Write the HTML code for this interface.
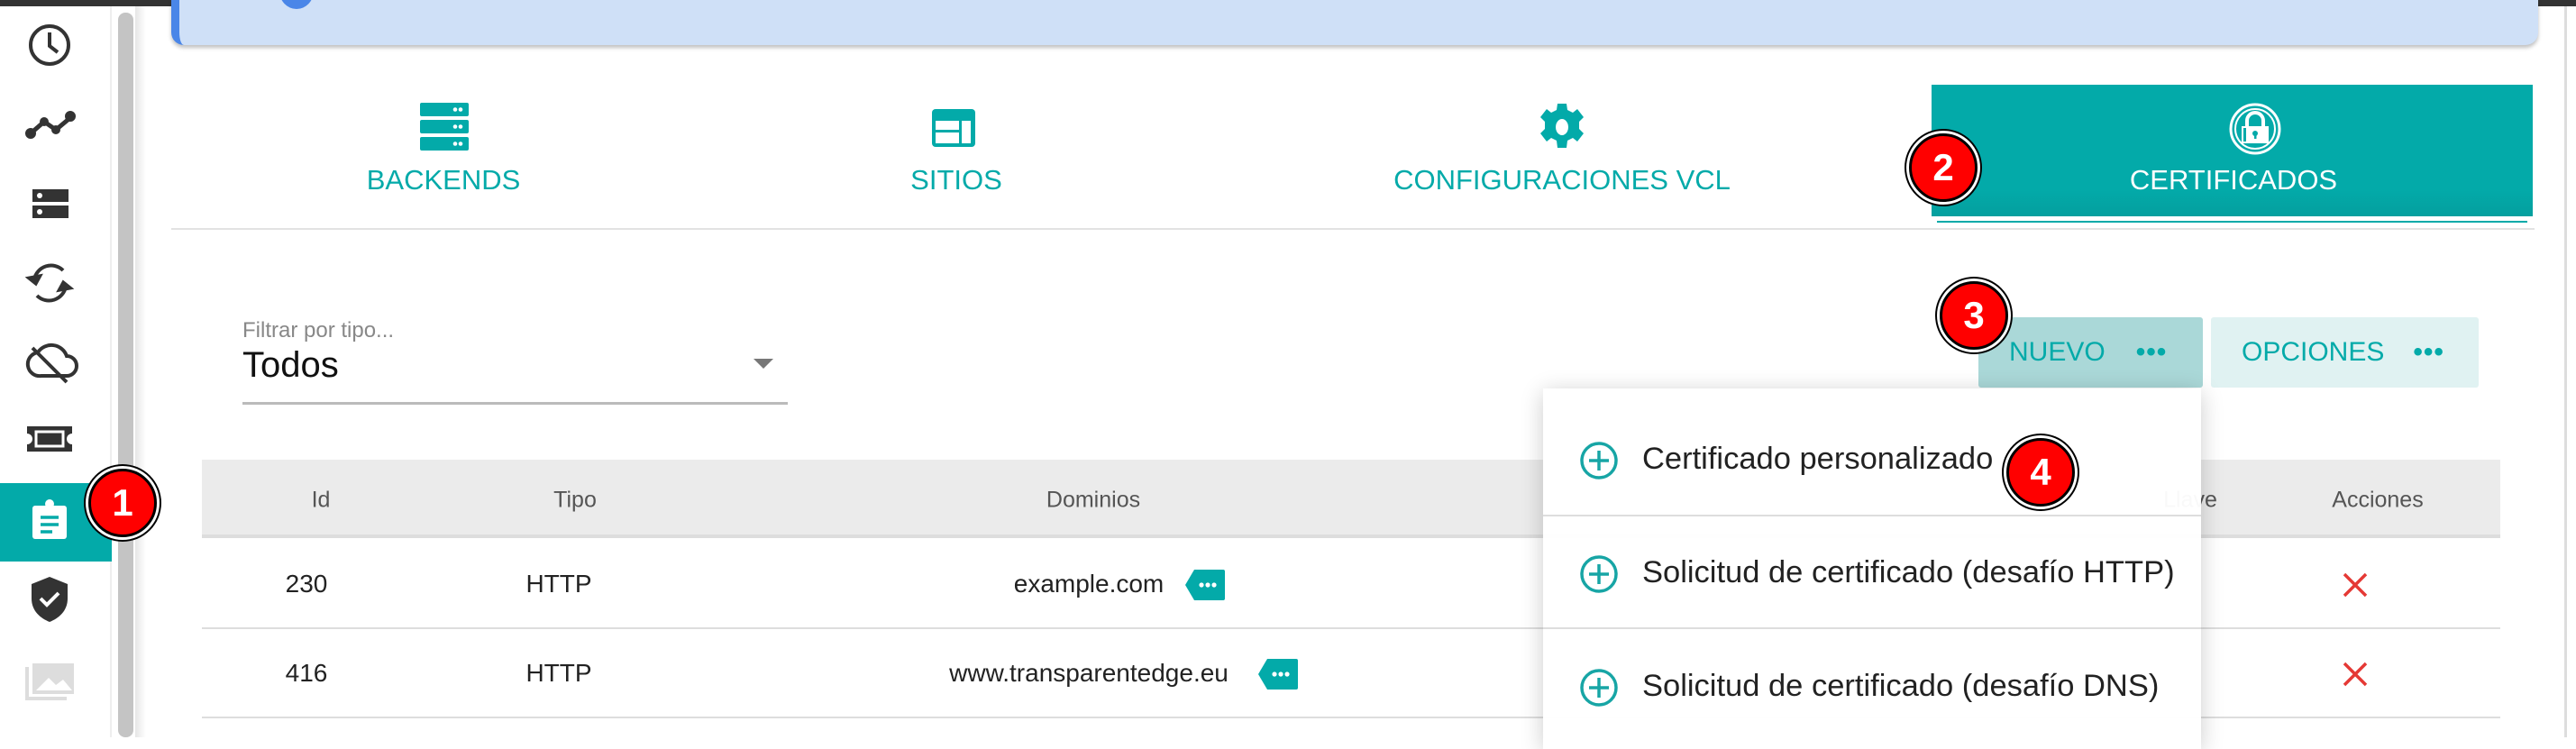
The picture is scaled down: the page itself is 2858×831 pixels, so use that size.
<!DOCTYPE html>
<html><head><meta charset="utf-8"><style>
*{margin:0;padding:0;box-sizing:border-box}
body{width:2858px;height:818px;overflow:hidden;background:#fff;font-family:"Liberation Sans",sans-serif;position:relative}
.a{position:absolute}
.tl{color:#03aaa9;font-size:31px;white-space:nowrap;transform:translateX(-50%)}
.hd{color:#555;font-size:25px;transform:translate(-50%,-50%);white-space:nowrap}
.td{color:#222;font-size:28px;transform:translate(-50%,-50%);white-space:nowrap}
.badge{width:76px;height:76px;border-radius:50%;background:#f00;border:3px solid #000;box-shadow:0 0 0 3px #fff,0 0 0 5px #000;color:#fff;font-weight:bold;font-size:42px;display:flex;align-items:center;justify-content:center;transform:translate(-50%,-50%)}
.mi{font-size:34.5px;color:#222;white-space:nowrap}
</style></head><body>
<div class="a" style="left:0;top:0;width:2858px;height:7px;background:#333"></div>
<div class="a" style="left:0;top:7px;width:124px;height:811px;background:#fff;border-right:2px solid #eee"></div>
<div class="a" style="left:131px;top:14px;width:17px;height:804px;background:#c4c4c4;border-radius:8px"></div>
<div class="a" style="left:150px;top:7px;width:12px;height:811px;background:linear-gradient(90deg,#e6e6e6,#fff)"></div>
<div class="a" style="left:0;top:536px;width:124px;height:87px;background:#03aaa9"></div>
<svg class="a" style="left:0;top:0" width="124" height="818" fill="none" stroke="#333" stroke-width="4">
<circle cx="55" cy="50" r="21"/><path d="M55 36v15l9 7"/>
<path d="M34 148l15-13 13 9 18-15" stroke-width="5"/><circle cx="34" cy="148" r="4" fill="#333"/><circle cx="78" cy="129" r="4" fill="#333"/><circle cx="49" cy="135" r="3" fill="#333"/><circle cx="62" cy="144" r="3" fill="#333"/>
<rect x="36" y="210" width="40" height="14" fill="#333" stroke="none"/><rect x="36" y="228" width="40" height="14" fill="#333" stroke="none"/><circle cx="44" cy="217" r="3" fill="#fff" stroke="none"/><circle cx="44" cy="235" r="3" fill="#fff" stroke="none"/>
<path d="M38 310a19 19 0 0 1 32-10M73 318a19 19 0 0 1-32 10"/><path d="M30 308l10 8 6-11z M80 320l-10-8-6 11z" fill="#333" stroke-width="2"/>
<path d="M46 417h28a11 11 0 0 0 0-22 18 18 0 0 0-32-4 12 12 0 0 0 4 26z"/><path d="M36 386l38 38"/>
<path d="M30 473h50v8a6 6 0 0 0 0 12v8h-50v-8a6 6 0 0 0 0-12z" fill="#333" stroke="none"/><rect x="40" y="479" width="30" height="16" stroke="#fff" stroke-width="3"/>
<rect x="36" y="561" width="38" height="37" rx="3" fill="#fff" stroke="none"/><circle cx="55" cy="559" r="5" fill="#fff" stroke="none"/><path d="M45 574h20M45 582h20M45 590h13" stroke="#03aaa9" stroke-width="3.5"/>
<path d="M55 640l20 8v16c0 14-10 22-20 26-10-4-20-12-20-26v-16z" fill="#333" stroke="none"/><path d="M45 664l7 7 13-13" stroke="#fff" stroke-width="4"/>
<path d="M30 740v35h44" stroke="#ddd"/><rect x="36" y="736" width="46" height="34" fill="#ddd" stroke="none"/><path d="M40 766l14-14 8 8 8-6 10 12z" fill="#fff" stroke="none"/>
</svg>
<div class="a" style="left:190px;top:0;width:2626px;height:50px;background:#cfe0f7;border-radius:0 0 14px 14px;box-shadow:0 3px 4px rgba(0,0,0,.25);border-left:9px solid #4a86e8"></div>
<div class="a" style="left:310px;top:-30px;width:38px;height:40px;border-radius:50%;background:#4a86e8"></div>
<div class="a" style="left:2845px;top:7px;width:3px;height:811px;background:#ddd"></div>
<div class="a" style="left:190px;top:253px;width:2622px;height:2px;background:#e2e2e2"></div>
<svg class="a" style="left:466px;top:114px" width="54" height="54"><rect x="0" y="0" width="54" height="15" rx="2" fill="#03aaa9"/><rect x="0" y="19" width="54" height="15" rx="2" fill="#03aaa9"/><rect x="0" y="38" width="54" height="15" rx="2" fill="#03aaa9"/><g fill="#fff"><circle cx="39" cy="7.5" r="2.3"/><circle cx="45" cy="7.5" r="2.3"/><circle cx="39" cy="26.5" r="2.3"/><circle cx="45" cy="26.5" r="2.3"/><circle cx="39" cy="45.5" r="2.3"/><circle cx="45" cy="45.5" r="2.3"/></g></svg>
<div class="a tl" style="left:492px;top:182px">BACKENDS</div>
<svg class="a" style="left:1034px;top:121px" width="48" height="42"><rect x="0" y="0" width="48" height="42" rx="4" fill="#03aaa9"/><g fill="#fff"><rect x="4" y="13" width="26" height="10"/><rect x="4" y="26" width="26" height="12"/><rect x="33" y="13" width="10" height="25"/></g></svg>
<div class="a tl" style="left:1061px;top:182px">SITIOS</div>
<svg class="a" style="left:1709px;top:115px" width="48" height="52" viewBox="0 0 48 52"><path fill="#03aaa9" fill-rule="evenodd" d="M19 0h10l1 7 6 3 5-4 7 9-5 5v8l5 5-7 9-5-4-6 3-1 8h-10l-1-8-6-3-5 4-7-9 5-5v-8l-5-5 7-9 5 4 6-3z M24 17a7 9 0 1 0 0.01 0z"/></svg>
<div class="a tl" style="left:1733px;top:182px">CONFIGURACIONES VCL</div>
<div class="a" style="left:2143px;top:94px;width:667px;height:146px;background:linear-gradient(#03aaa9 80%,#049f9e)"></div>
<div class="a" style="left:2149px;top:245px;width:655px;height:2px;background:#03aaa9"></div>
<svg class="a" style="left:2472px;top:113px" width="60" height="60"><circle cx="30" cy="30" r="27" fill="none" stroke="#fff" stroke-width="3"/><circle cx="30" cy="30" r="22" fill="none" stroke="#fff" stroke-width="2"/><path d="M21 27v-6a9 9 0 0 1 18 0v6" fill="none" stroke="#fff" stroke-width="4"/><rect x="15" y="27" width="30" height="19" fill="#fff"/><rect x="17" y="29" width="3" height="15" fill="#03aaa9"/><circle cx="30" cy="35" r="3" fill="#03aaa9"/><rect x="29" y="35" width="2.5" height="6" fill="#03aaa9"/></svg>
<div class="a tl" style="left:2478px;top:182px;color:#fff">CERTIFICADOS</div>
<div class="a" style="left:269px;top:353px;font-size:24px;color:#888">Filtrar por tipo...</div>
<div class="a" style="left:269px;top:383px;font-size:40px;color:#111">Todos</div>
<div class="a" style="left:836px;top:398px;width:0;height:0;border-left:11px solid transparent;border-right:11px solid transparent;border-top:11px solid #777"></div>
<div class="a" style="left:269px;top:446px;width:605px;height:3px;background:#bbb"></div>
<div class="a" style="left:2195px;top:352px;width:249px;height:78px;background:#aad8d8;border-radius:3px;color:#03aaa9;font-size:30px;line-height:78px;padding-left:34px">NUEVO<span style="margin-left:34px;font-weight:bold;letter-spacing:1px">•••</span></div>
<div class="a" style="left:2453px;top:352px;width:297px;height:78px;background:#e0f2f2;border-radius:3px;color:#03aaa9;font-size:30px;line-height:78px;padding-left:34px">OPCIONES<span style="margin-left:32px;font-weight:bold;letter-spacing:1px">•••</span></div>
<div class="a" style="left:224px;top:510px;width:2550px;height:87px;background:#ebebeb;border-bottom:4px solid #ddd"></div>
<div class="a hd" style="left:356px;top:555px">Id</div>
<div class="a hd" style="left:638px;top:555px">Tipo</div>
<div class="a hd" style="left:1213px;top:555px">Dominios</div>
<div class="a hd" style="left:2430px;top:555px">Llave</div>
<div class="a hd" style="left:2638px;top:555px">Acciones</div>
<div class="a" style="left:224px;top:696px;width:2550px;height:2px;background:#ddd"></div>
<div class="a" style="left:224px;top:795px;width:2550px;height:2px;background:#ddd"></div>
<div class="a td" style="left:340px;top:648px">230</div><div class="a td" style="left:620px;top:648px">HTTP</div>
<div class="a td" style="left:1208px;top:648px">example.com</div>
<div class="a td" style="left:340px;top:747px">416</div><div class="a td" style="left:620px;top:747px">HTTP</div>
<div class="a td" style="left:1208px;top:747px">www.transparentedge.eu</div>
<svg class="a" style="left:1315px;top:632px" width="44" height="34"><path d="M10 0h32a2 2 0 0 1 2 2v30a2 2 0 0 1-2 2h-32l-10-17z" fill="#03aaa9"/><g fill="#fff"><circle cx="18" cy="17" r="2.6"/><circle cx="25" cy="17" r="2.6"/><circle cx="32" cy="17" r="2.6"/></g></svg>
<svg class="a" style="left:1396px;top:731px" width="44" height="34"><path d="M10 0h32a2 2 0 0 1 2 2v30a2 2 0 0 1-2 2h-32l-10-17z" fill="#03aaa9"/><g fill="#fff"><circle cx="18" cy="17" r="2.6"/><circle cx="25" cy="17" r="2.6"/><circle cx="32" cy="17" r="2.6"/></g></svg>
<svg class="a" style="left:2599px;top:635px" width="28" height="28"><path d="M2 2l24 24M26 2l-24 24" stroke="#e53935" stroke-width="3.5"/></svg>
<svg class="a" style="left:2599px;top:734px" width="28" height="28"><path d="M2 2l24 24M26 2l-24 24" stroke="#e53935" stroke-width="3.5"/></svg>
<div class="a" style="left:1712px;top:431px;width:730px;height:400px;background:rgba(255,255,255,.97);box-shadow:0 4px 24px rgba(0,0,0,.2)"></div>
<div class="a" style="left:1712px;top:571px;width:730px;height:2px;background:#ddd"></div>
<div class="a" style="left:1712px;top:696px;width:730px;height:2px;background:#ddd"></div>
<svg class="a" style="left:1751px;top:488px" width="46" height="320"><g fill="none" stroke="#17a5a5" stroke-width="3.5"><circle cx="23" cy="23" r="19"/><path d="M23 12v22M12 23h22"/><circle cx="23" cy="149" r="19"/><path d="M23 138v22M12 149h22"/><circle cx="23" cy="275" r="19"/><path d="M23 264v22M12 275h22"/></g></svg>
<div class="a mi" style="left:1822px;top:490px">Certificado personalizado</div>
<div class="a mi" style="left:1822px;top:616px">Solicitud de certificado (desafío HTTP)</div>
<div class="a mi" style="left:1822px;top:742px">Solicitud de certificado (desafío DNS)</div>
<div class="a badge" style="left:136px;top:558px">1</div>
<div class="a badge" style="left:2156px;top:186px">2</div>
<div class="a badge" style="left:2190px;top:350px">3</div>
<div class="a badge" style="left:2264px;top:524px">4</div>
</body></html>
